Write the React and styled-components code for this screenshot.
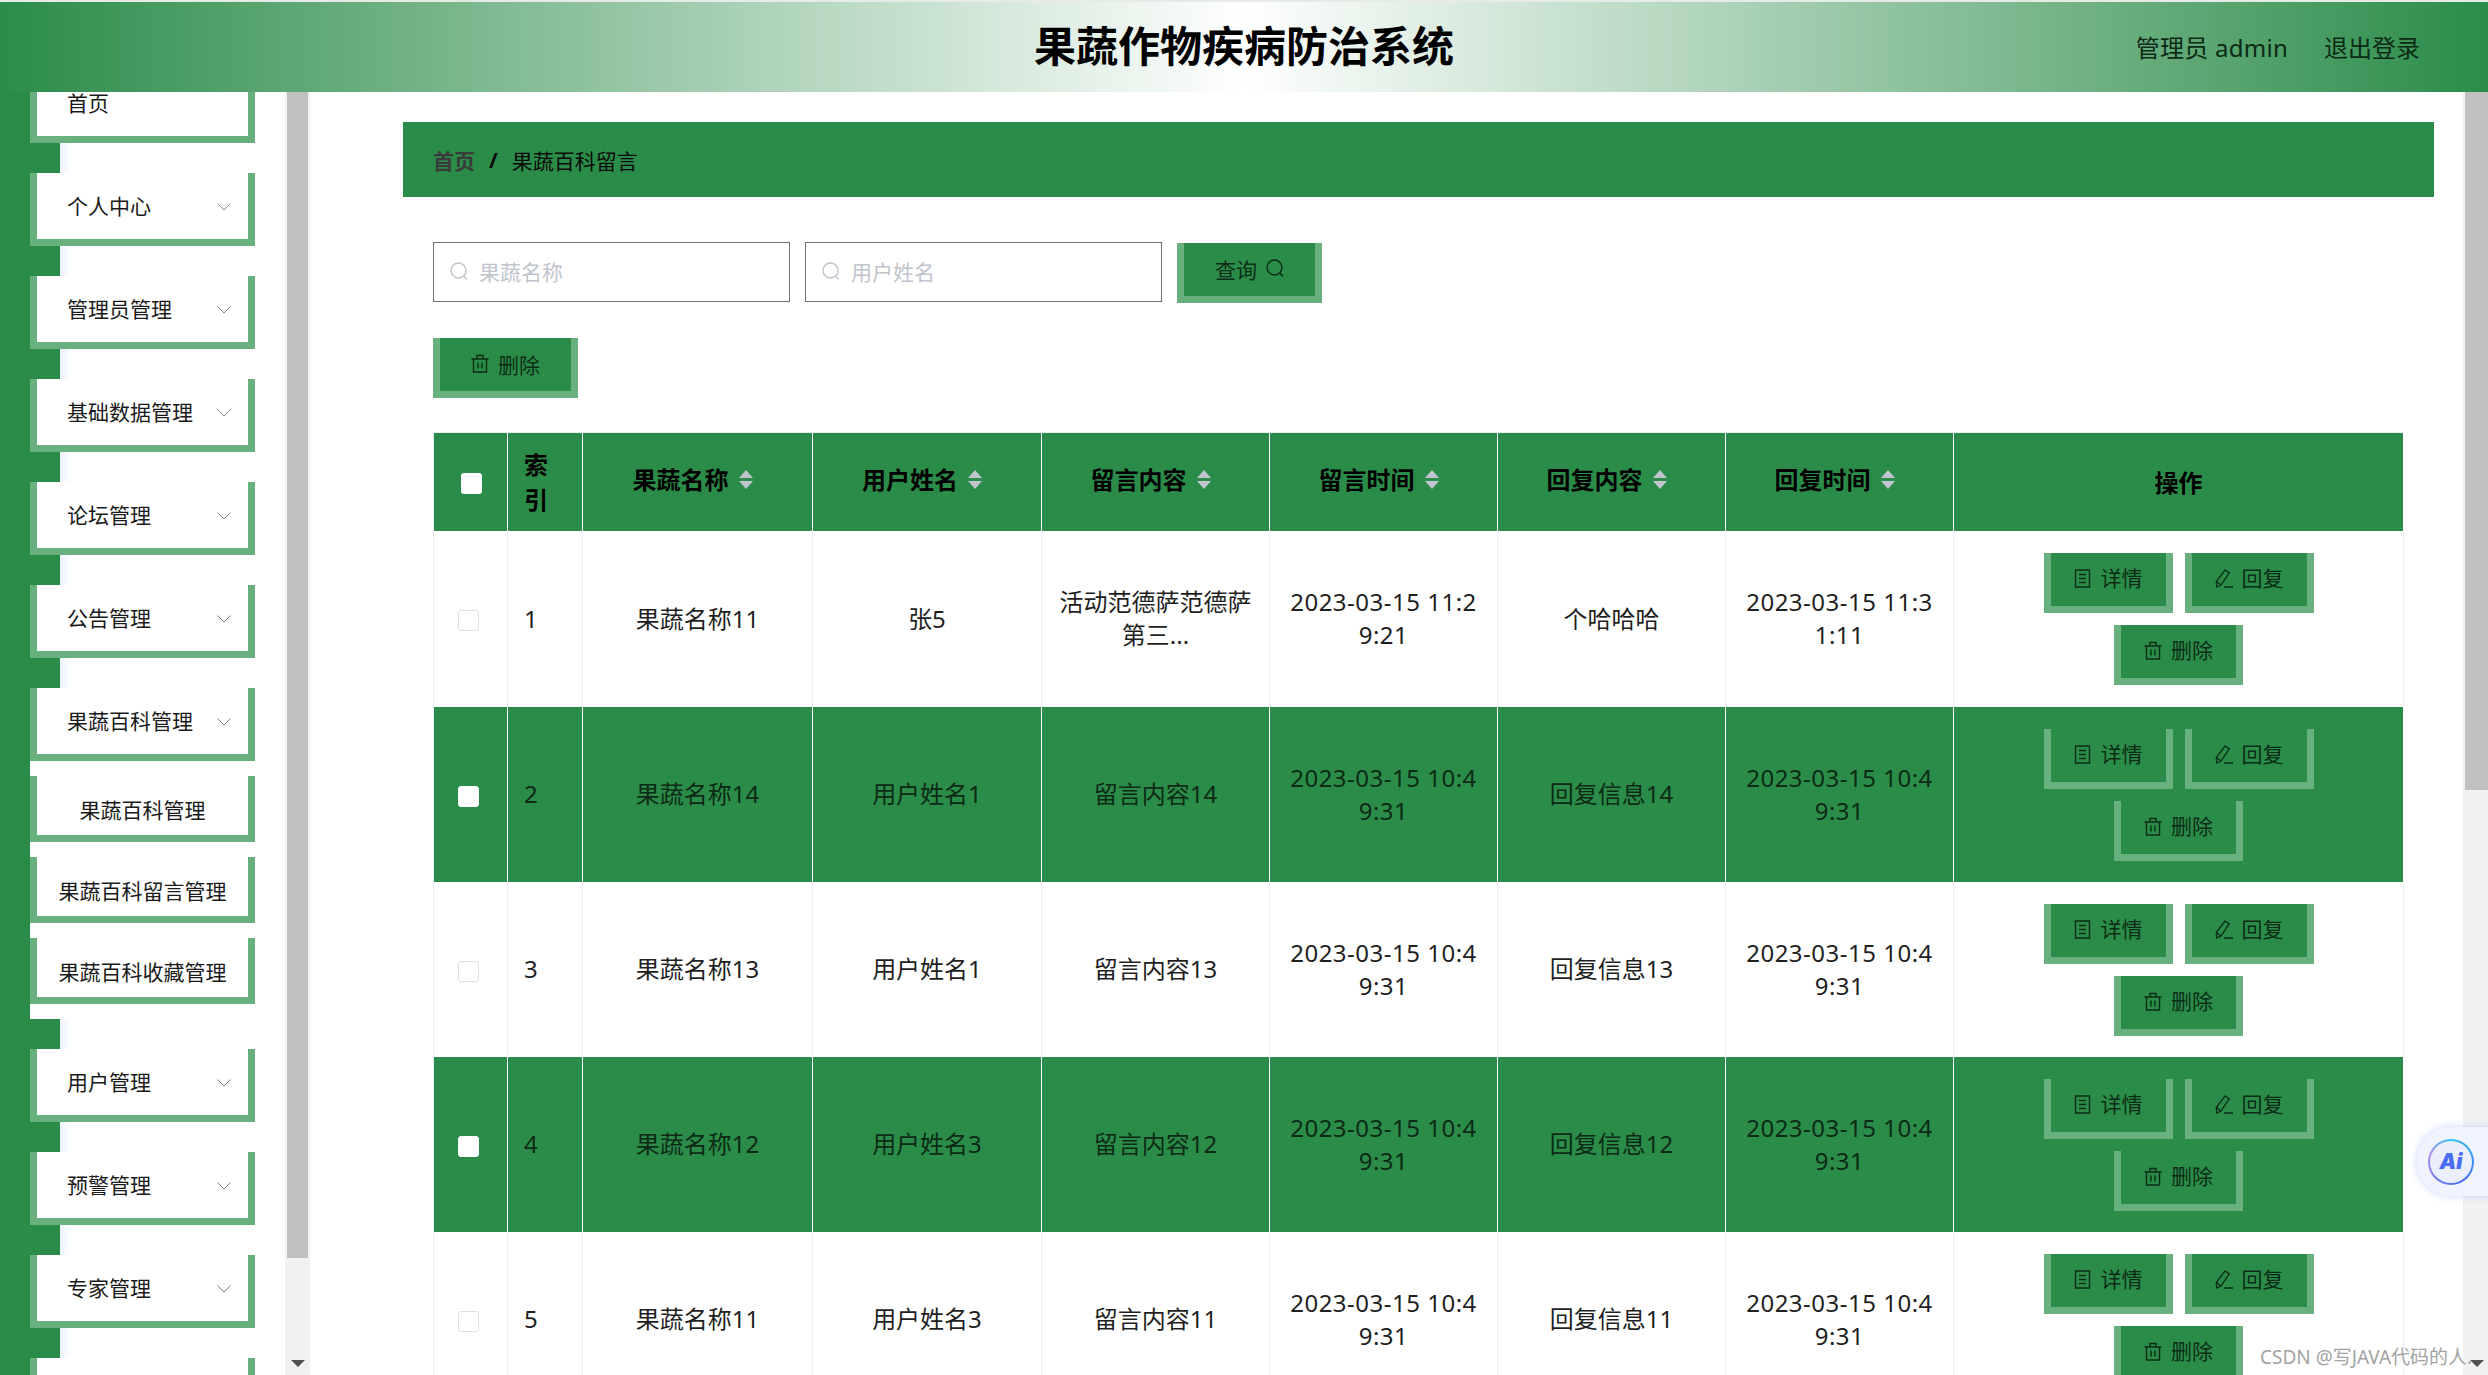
import React from "react";
import styled, { createGlobalStyle } from "styled-components";

const GREEN = "#2b8c49";
const EDGE = "#69b07f";
const INK = "#0b2c16";

const menuBefore = ["首页", "个人中心", "管理员管理", "基础数据管理", "论坛管理", "公告管理"];
const subMenu = ["果蔬百科管理", "果蔬百科留言管理", "果蔬百科收藏管理"];
const menuAfter = ["用户管理", "预警管理", "专家管理", ""];

const columns = ["果蔬名称", "用户姓名", "留言内容", "留言时间", "回复内容", "回复时间"];

const rows = [
  ["果蔬名称11", "张5", "活动范德萨范德萨第三...", "2023-03-15 11:29:21", "个哈哈哈", "2023-03-15 11:31:11"],
  ["果蔬名称14", "用户姓名1", "留言内容14", "2023-03-15 10:49:31", "回复信息14", "2023-03-15 10:49:31"],
  ["果蔬名称13", "用户姓名1", "留言内容13", "2023-03-15 10:49:31", "回复信息13", "2023-03-15 10:49:31"],
  ["果蔬名称12", "用户姓名3", "留言内容12", "2023-03-15 10:49:31", "回复信息12", "2023-03-15 10:49:31"],
  ["果蔬名称11", "用户姓名3", "留言内容11", "2023-03-15 10:49:31", "回复信息11", "2023-03-15 10:49:31"],
];

const colWidths = [74, 75, 230, 229, 228, 228, 228, 228, 450];

function Chevron() {
  return (
    <ChevronMark width="14" height="8" viewBox="0 0 14 8" fill="none" stroke="#7d8288" strokeWidth="1">
      <polyline points="0.5,0.5 7,7 13.5,0.5" />
    </ChevronMark>
  );
}

function SearchIcon({ color }) {
  return (
    <svg width="18" height="19" viewBox="0 0 18 19" fill="none" stroke={color} strokeWidth="1.4">
      <circle cx="8.5" cy="8.5" r="7.5" />
      <line x1="13.8" y1="14" x2="16.5" y2="17" strokeLinecap="round" />
    </svg>
  );
}

function TrashIcon() {
  return (
    <svg width="18" height="19" viewBox="0 0 18 19" fill="none" stroke={INK} strokeWidth="1.4">
      <path d="M0.5 5h17M6 5V1.5h6V5M2.5 5v13h13V5M7 8.5v6M11 8.5v6" />
    </svg>
  );
}

function DocIcon() {
  return (
    <svg width="18" height="19" viewBox="0 0 18 19" fill="none" stroke={INK} strokeWidth="1.4">
      <path d="M1.5 1h14v17h-14zM5 5.5h7M5 9.5h7M5 13.5h7" />
    </svg>
  );
}

function PenIcon() {
  return (
    <svg width="18" height="19" viewBox="0 0 18 19" fill="none" stroke={INK} strokeWidth="1.3">
      <path d="M10 1l4.3 2.7L6 16l-4.3 2-.4-5.5zM1.4 12.5L6 16M9 18h9" />
    </svg>
  );
}

function ActionButton({ icon, children }) {
  return (
    <Button>
      {icon}
      {children}
    </Button>
  );
}

export default function App() {
  return (
    <Page>
      <GlobalStyle />
      <TopBar>
        <TopBarSide />
        <Title>果蔬作物疾病防治系统</Title>
        <TopBarSide $right>
          <UserName>管理员 admin</UserName>
          <span>退出登录</span>
        </TopBarSide>
      </TopBar>

      <Body>
        <Side>
          <Menu>
            {menuBefore.map((label, i) => (
              <React.Fragment key={label}>
                <MenuItem>
                  {label}
                  {i > 0 && <Chevron />}
                </MenuItem>
                <MenuGap />
              </React.Fragment>
            ))}
            <MenuItem>
              果蔬百科管理
              <Chevron />
            </MenuItem>
            <SubPanel>
              {subMenu.map((label) => (
                <SubItem key={label}>{label}</SubItem>
              ))}
            </SubPanel>
            <MenuGap />
            {menuAfter.map((label) => (
              <React.Fragment key={label}>
                <MenuItem>
                  {label}
                  <Chevron />
                </MenuItem>
                <MenuGap />
              </React.Fragment>
            ))}
          </Menu>
        </Side>
        <Track $inset="0 2px">
          <Thumb $height={1166} />
          <Arrow />
        </Track>

        <Main>
          <Breadcrumb>
            <strong>首页</strong>
            <i>/</i>
            <span>果蔬百科留言</span>
          </Breadcrumb>
          <Content>
            <SearchRow>
              <SearchBox>
                <SearchIcon color="#c0c4cc" />
                <span>果蔬名称</span>
              </SearchBox>
              <SearchBox>
                <SearchIcon color="#c0c4cc" />
                <span>用户姓名</span>
              </SearchBox>
              <QueryButton>
                查询
                <SearchIcon color={INK} />
              </QueryButton>
            </SearchRow>
            <Toolbar>
              <WideButton>
                <TrashIcon />
                删除
              </WideButton>
            </Toolbar>
            <Table>
              <colgroup>
                {colWidths.map((w, i) => (
                  <col key={i} width={w} />
                ))}
              </colgroup>
              <thead>
                <tr>
                  <HeadCell>
                    <HeadCheck />
                  </HeadCell>
                  <HeadCell $left>索引</HeadCell>
                  {columns.map((c) => (
                    <HeadCell key={c}>
                      <SortLabel>
                        {c}
                        <Carets>
                          <CaretUp />
                          <CaretDown />
                        </Carets>
                      </SortLabel>
                    </HeadCell>
                  ))}
                  <HeadCell>操作</HeadCell>
                </tr>
              </thead>
              <tbody>
                {rows.map((row, i) => {
                  const green = i % 2 === 1;
                  return (
                    <Row key={i} $green={green}>
                      <Cell $green={green}>
                        <RowCheck $green={green} />
                      </Cell>
                      <Cell $green={green} $left>
                        {i + 1}
                      </Cell>
                      {row.map((value, j) => (
                        <Cell key={j} $green={green} $date={j === 3 || j === 5}>
                          {value}
                        </Cell>
                      ))}
                      <Cell $green={green}>
                        <Actions>
                          <ActionButton icon={<DocIcon />}>详情</ActionButton>
                          <ActionButton icon={<PenIcon />}>回复</ActionButton>
                          <ActionButton icon={<TrashIcon />}>删除</ActionButton>
                        </Actions>
                      </Cell>
                    </Row>
                  );
                })}
              </tbody>
            </Table>
          </Content>
        </Main>
        <Track $inset="0 0 0 2px">
          <Thumb $height={698} />
          <Arrow />
        </Track>
      </Body>

      <AiBadge>
        <AiRing>
          <AiFace>Ai</AiFace>
        </AiRing>
      </AiBadge>
      <Watermark>CSDN @写JAVA代码的人.</Watermark>
    </Page>
  );
}

const GlobalStyle = createGlobalStyle`
  html, body {
    margin: 0;
    padding: 0;
    background: #fff;
  }
  * {
    box-sizing: border-box;
  }
`;

const Page = styled.div`
  position: relative;
  display: flex;
  flex-direction: column;
  height: 100vh;
  overflow: hidden;
  color: #1a1a1a;
  font-family: "Noto Sans", "Noto Sans CJK SC", sans-serif;
`;

const TopBar = styled.header`
  flex: none;
  display: flex;
  align-items: center;
  justify-content: space-between;
  height: 92px;
  border-top: 2px solid #e6ebe8;
  background: linear-gradient(90deg, ${GREEN} 0%, #fff 50%, ${GREEN} 100%);
`;

const Title = styled.h1`
  margin: 0 0 2px;
  font-size: 42px;
  font-weight: 700;
  line-height: 1;
  color: #000;
`;

const TopBarSide = styled.div`
  flex: 1;
  display: flex;
  justify-content: flex-end;
  gap: 36px;
  padding: 0 68px 2px 0;
  font-size: 24px;
  color: #0c2a16;
`;

const UserName = styled.span`
  letter-spacing: 0.25px;
`;

const Body = styled.div`
  flex: 1;
  display: flex;
  min-height: 0;
`;

const Side = styled.aside`
  flex: none;
  width: 285px;
  overflow: hidden;
  background: linear-gradient(90deg, ${GREEN} 30px, #fff 30px);
`;

const Menu = styled.nav`
  margin-top: -22px;
`;

const MenuItem = styled.div`
  display: flex;
  align-items: center;
  justify-content: space-between;
  width: 225px;
  height: 73px;
  margin-left: 30px;
  padding: 0 17px 2px 30px;
  background: #fff;
  border: 7px solid ${EDGE};
  border-top: 0;
  font-size: 21px;
`;

const ChevronMark = styled.svg`
  margin-top: 3px;
`;

const MenuGap = styled.div`
  height: 30px;
  background: linear-gradient(90deg, ${GREEN} 60px, #edf3fe 60px, #fff 72px);
`;

const SubPanel = styled.div`
  display: flex;
  flex-direction: column;
  gap: 15px;
  margin-left: 30px;
  padding: 15px 0;
  background: #fff;
  border-radius: 9px;
`;

const SubItem = styled.div`
  display: flex;
  align-items: center;
  justify-content: center;
  width: 225px;
  height: 66px;
  padding-top: 6px;
  border: 7px solid ${EDGE};
  border-top: 0;
  font-size: 21px;
  white-space: nowrap;
`;

const Track = styled.div`
  flex: none;
  display: flex;
  flex-direction: column;
  width: 25px;
  padding: ${(p) => p.$inset};
  background: #f1f1f1;
`;

const Thumb = styled.div`
  flex: none;
  height: ${(p) => p.$height}px;
  background: #c1c1c1;
`;

const Arrow = styled.div`
  align-self: center;
  width: 0;
  height: 0;
  margin-top: auto;
  margin-bottom: 8px;
  border-left: 7px solid transparent;
  border-right: 7px solid transparent;
  border-top: 7px solid #505050;
`;

const Main = styled.main`
  flex: 1;
  min-width: 0;
  overflow: hidden;
  padding: 30px 29px 0 93px;
`;

const Breadcrumb = styled.div`
  display: flex;
  align-items: center;
  height: 75px;
  padding-left: 30px;
  background: ${GREEN};
  font-size: 21px;
  color: #0a0a0a;

  strong {
    font-weight: 700;
    color: #3a3a3a;
  }
  i {
    margin: 0 14px;
    font-style: normal;
    font-weight: 700;
  }
`;

const Content = styled.div`
  padding: 45px 0 0 30px;
`;

const SearchRow = styled.div`
  display: flex;
  align-items: flex-start;
  gap: 15px;
`;

const SearchBox = styled.div`
  display: flex;
  align-items: center;
  gap: 11px;
  width: 357px;
  height: 60px;
  padding: 0 0 2px 16px;
  border: 1px solid #6f6f6f;
  font-size: 21px;
  color: #c0c4cc;
`;

const Button = styled.button`
  display: inline-flex;
  align-items: center;
  justify-content: center;
  gap: 9px;
  min-width: 129px;
  height: 60px;
  padding: 0 23px 2px;
  background: ${GREEN};
  border: 7px solid ${EDGE};
  border-top: 0;
  border-radius: 0;
  font: inherit;
  font-size: 21px;
  color: ${INK};
`;

const WideButton = styled(Button)`
  min-width: 145px;
`;

const QueryButton = styled(WideButton)`
  margin-top: 1px;
`;

const Toolbar = styled.div`
  margin: 35px 0 34px;
`;

const Table = styled.table`
  width: 1971px;
  table-layout: fixed;
  border-collapse: separate;
  border-spacing: 0;
  border-left: 1px solid #ebeef5;
`;

const HeadCell = styled.th`
  height: 99px;
  padding: 0 ${(p) => (p.$left ? "16px" : "17px")};
  background: ${GREEN};
  border-top: 1px solid #ebeef5;
  border-right: 1px solid #fff;
  font-size: 24px;
  font-weight: 700;
  line-height: 35px;
  color: #000;
  text-align: ${(p) => (p.$left ? "left" : "center")};
`;

const HeadCheck = styled.span`
  display: block;
  width: 21px;
  height: 21px;
  margin: 2px auto 0 10px;
  background: #fff;
  border-radius: 3px;
`;

const SortLabel = styled.span`
  display: flex;
  align-items: center;
  justify-content: center;
  gap: 10px;
  padding-bottom: 6px;
`;

const Carets = styled.span`
  display: inline-flex;
  flex-direction: column;
  gap: 3px;
  margin-right: 10px;
`;

const CaretUp = styled.span`
  width: 0;
  height: 0;
  border-left: 7px solid transparent;
  border-right: 7px solid transparent;
  border-bottom: 8px solid #c0c4cc;
`;

const CaretDown = styled(CaretUp)`
  border-bottom: 0;
  border-top: 8px solid #c0c4cc;
`;

const Row = styled.tr`
  background: ${(p) => (p.$green ? GREEN : "#fff")};

  &:first-child td {
    height: 176px;
  }
`;

const Cell = styled.td`
  height: 175px;
  padding: 0 ${(p) => (p.$left ? "16px" : "17px")} 2px;
  border-right: 1px solid ${(p) => (p.$green ? "#fff" : "#ebeef5")};
  font-size: 24px;
  line-height: 33px;
  color: ${(p) => (p.$green ? "#0c2a16" : "#1f1f1f")};
  word-break: break-all;
  text-align: ${(p) => (p.$left ? "left" : "center")};
  letter-spacing: ${(p) => (p.$date ? "0.5px" : "0")};
`;

const RowCheck = styled.span`
  display: block;
  width: 21px;
  height: 21px;
  margin: 5px 0 0 7px;
  background: #fff;
  border: 1px solid ${(p) => (p.$green ? "#fff" : "#dcdfe6")};
  border-radius: 3px;
`;

const Actions = styled.div`
  display: flex;
  flex-wrap: wrap;
  justify-content: center;
  gap: 12px;
  margin-top: 2px;
  padding: 0 42px;
`;

const AiBadge = styled.div`
  position: absolute;
  top: 1127px;
  right: -40px;
  display: flex;
  align-items: center;
  width: 111px;
  height: 69px;
  padding-left: 11px;
  background: #eff4ff;
  border-radius: 35px;
  box-shadow: 0 0 8px #c9d6fb;
`;

const AiRing = styled.div`
  width: 46px;
  height: 46px;
  padding: 2px;
  border-radius: 50%;
  background: conic-gradient(from 0deg, #2fc4f0, #4a6cf0 40%, #6f7df0 60%, #b48cec 80%, #2fc4f0);
`;

const AiFace = styled.div`
  display: flex;
  align-items: center;
  justify-content: center;
  width: 100%;
  height: 100%;
  border-radius: 50%;
  background: #eaeefd;
  font-family: "Inter", sans-serif;
  font-size: 21px;
  font-weight: 900;
  font-style: italic;
  color: #4a6cf0;
`;

const Watermark = styled.div`
  position: absolute;
  top: 1345px;
  left: 2260px;
  font-size: 19px;
  line-height: 24px;
  white-space: nowrap;
  color: #a3a3a3;
  text-shadow: 1px 1px 1px #fff;
`;
